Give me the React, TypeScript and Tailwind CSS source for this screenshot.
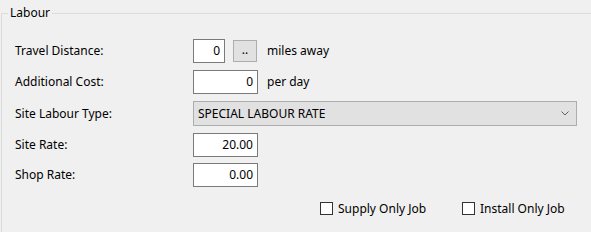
import React from "react"

// --- Small pieces ---
function NumBox({ value, w }: { value: string; w: string }) {
  return (
    <div className={`${w} h-[24px] bg-white border border-[#7a7a7a] flex items-center justify-end pr-[4px]`}>
      <span className="leading-none">{value}</span>
    </div>
  )
}

function Check({ label }: { label: string }) {
  return (
    <label className="flex items-center gap-[5px]">
      <span className="w-[13px] h-[13px] bg-white border border-[#333333]" />
      <span className="leading-none">{label}</span>
    </label>
  )
}

export default function App() {
  return (
    <div
      className="w-[591px] h-[232px] bg-[#f0f0f0] overflow-hidden text-[12px] text-black"
      style={{ fontFamily: '"Noto Sans", "Open Sans", sans-serif' }}
    >
      {/* Group box */}
      <div className="relative mt-[13px] ml-[1px] h-[219px] border-l border-t border-[#dcdcdc]">
        <span className="absolute left-[6px] top-[-10px] px-[2px] bg-[#f0f0f0] leading-[18px]">Labour</span>

        <div className="pl-[13px] pt-[25px] flex flex-col">
          {/* Travel Distance */}
          <div className="flex items-center h-[24px]">
            <span className="w-[178px]">Travel Distance:</span>
            <NumBox value="0" w="w-[32px]" />
            <button className="ml-[8px] w-[24px] h-[22px] bg-[#e1e1e1] border border-[#adadad] flex items-center justify-center leading-none pb-[2px]">..</button>
            <span className="ml-[10px]">miles away</span>
          </div>

          {/* Additional Cost */}
          <div className="flex items-center h-[24px] mt-[7px]">
            <span className="w-[178px]">Additional Cost:</span>
            <NumBox value="0" w="w-[65px]" />
            <span className="ml-[9px]">per day</span>
          </div>

          {/* Site Labour Type */}
          <div className="flex items-center h-[25px] mt-[7px]">
            <span className="w-[178px]">Site Labour Type:</span>
            <div className="w-[384px] h-[25px] bg-[#e1e1e1] border border-[#adadad] flex items-center justify-between pl-[4px] pr-[7px]">
              <span>SPECIAL LABOUR RATE</span>
              <svg width="8" height="5" viewBox="0 0 8 5" fill="none">
                <polyline points="0.5,0.5 4,4 7.5,0.5" stroke="#606060" strokeWidth="1" />
              </svg>
            </div>
          </div>

          {/* Site Rate */}
          <div className="flex items-center h-[25px] mt-[6px]">
            <span className="w-[178px]">Site Rate:</span>
            <NumBox value="20.00" w="w-[65px]" />
          </div>

          {/* Shop Rate */}
          <div className="flex items-center h-[24px] mt-[6px]">
            <span className="w-[178px]">Shop Rate:</span>
            <NumBox value="0.00" w="w-[65px]" />
          </div>

          {/* Options */}
          <div className="flex items-center h-[13px] mt-[15px] ml-[305px]">
            <div className="w-[142px]"><Check label="Supply Only Job" /></div>
            <Check label="Install Only Job" />
          </div>
        </div>
      </div>
    </div>
  )
}
